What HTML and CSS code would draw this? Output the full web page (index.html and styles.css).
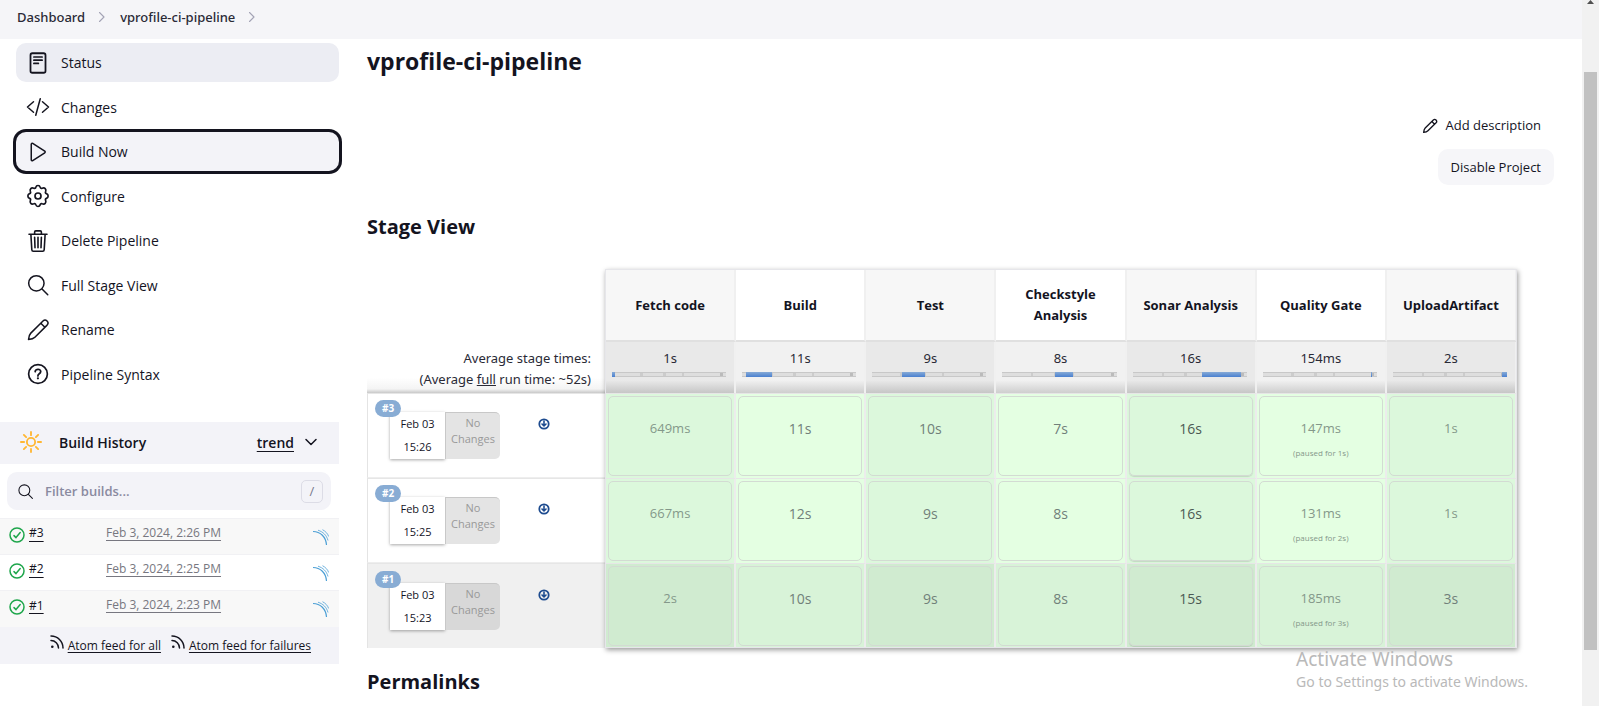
FILE: index.html
```html
<!DOCTYPE html>
<html lang="en">
<head>
<meta charset="utf-8">
<title>vprofile-ci-pipeline</title>
<link rel="stylesheet" href="styles.css">
</head>
<body>
<svg class="defs" width="0" height="0" aria-hidden="true">
  <symbol id="pencil" viewBox="0 0 24 24"><path d="M2.500 21.500c.3-3.200.9-5 2.300-6.400L17 3a2.900 2.900 0 0 1 4.100 4.100L8.900 19.200c-1.400 1.400-3.200 2-6.400 2.300zM14.800 5.200l4.100 4.100"/></symbol>
  <symbol id="search" viewBox="0 0 512 512"><path stroke-width="32" d="M221.090 56a164 164 0 1 0 164 164a164 164 0 0 0-164-164zM342 342L464 464"/></symbol>
  <symbol id="chevron" viewBox="0 0 12 16"><path d="M2 2l6 6-6 6"/></symbol>
  <symbol id="ok" viewBox="0 0 16 16"><circle cx="8" cy="8" r="7"/><path d="M5 8.600l2 2 4.200-5"/></symbol>
  <symbol id="wave" viewBox="0 0 16 16"><path stroke-width="1.200" d="M0 2.500C7.500 2.500 13 8 13.500 16"/><path stroke-width=".8" d="M5 1.200C10 2.800 13.500 6 15 11.500M9.500.7C12.500 2.300 14.500 4.300 15.700 7.500"/></symbol>
  <symbol id="rss" viewBox="0 0 14 14"><circle cx="2.300" cy="11.700" r="1.300" fill="currentColor" stroke="none"/><path d="M1 5.500A7.500 7.500 0 0 1 8.500 13M1 1a12 12 0 0 1 12 12"/></symbol>
  <symbol id="down" viewBox="0 0 12 12"><circle cx="6" cy="6" r="4.700" stroke-width="1.800"/><path stroke-width="1.600" d="M6 3v4.500M4 6l2 2 2-2"/></symbol>
</svg>

<nav class="crumbs" aria-label="Breadcrumb">
  <a href="#">Dashboard</a>
  <svg class="crumb-sep"><use href="#chevron"/></svg>
  <a href="#">vprofile-ci-pipeline</a>
  <svg class="crumb-sep"><use href="#chevron"/></svg>
</nav>

<div class="page">
  <aside class="side">
    <nav class="tasks" aria-label="Tasks">
      <a class="task active" href="#"><svg viewBox="0 0 512 512"><rect x="96" y="48" width="320" height="416" rx="40" stroke-width="38"/><path d="M168 128h176M168 196h176M168 264h96" stroke-width="36"/></svg>Status</a>
      <a class="task" href="#"><svg viewBox="0 0 512 512"><path stroke-width="32" d="M160 368L32 256l128-112M352 368l128-112-128-112M304 80l-96 352"/></svg>Changes</a>
      <a class="task focused" href="#"><svg viewBox="0 0 512 512"><path stroke-width="32" d="M112 91v330c0 17 17 28 31 20l257-168c12-7 12-26 0-34L143 71c-14-8-31 3-31 20z"/></svg>Build Now</a>
      <a class="task" href="#"><svg viewBox="0 0 512 512"><circle cx="256" cy="256" r="64" stroke-width="36"/><path stroke-width="36" d="M208 72q12-40 48-40t48 40q10 32 42 18q40-16 64 8t8 64q-14 32 18 44q36 14 36 50t-36 50q-32 12-18 44q16 40-8 64t-64 8q-32-14-42 18q-12 40-48 40t-48-40q-10-32-42-18q-40 16-64-8t-8-64q14-32-18-44q-36-14-36-50t36-50q32-12 18-44q-16-40 8-64t64-8q32 14 42-18z"/></svg>Configure</a>
      <a class="task" href="#"><svg viewBox="0 0 512 512"><path stroke-width="34" d="M104 112l20 330c1 18 14 32 32 32h200c18 0 31-14 32-32l20-330M64 112h384M184 112V64a24 24 0 0 1 24-24h96a24 24 0 0 1 24 24v48M256 176v224M184 176l8 224M328 176l-8 224"/></svg>Delete Pipeline</a>
      <a class="task" href="#"><svg><use href="#search"/></svg>Full Stage View</a>
      <a class="task" href="#"><svg><use href="#pencil"/></svg>Rename</a>
      <a class="task" href="#"><svg viewBox="0 0 512 512"><circle cx="256" cy="256" r="200" stroke-width="36"/><path stroke-width="38" d="M196 206s1-22 20-37c11-9 26-13 40-13 12 0 22 2 28 5 11 5 30 18 30 43 0 27-18 39-37 52s-23 25-23 40"/><circle class="dot" cx="254" cy="348" r="24"/></svg>Pipeline Syntax</a>
    </nav>

    <section class="history">
      <header class="history-head">
        <svg class="sun" viewBox="0 0 24 24"><circle cx="12" cy="12" r="4.500"/><path d="M12 1v3.500M12 19.500V23M1 12h3.500M19.500 12H23M4.200 4.200l2.500 2.500M17.300 17.300l2.500 2.500M4.200 19.800l2.500-2.500M17.300 6.700l2.500-2.500"/></svg>
        <h2 class="history-title">Build History</h2>
        <a class="trend" href="#">trend</a>
        <svg class="caret" viewBox="0 0 12 12"><path d="M1 3.500l5 5 5-5"/></svg>
      </header>
      <div class="filter">
        <svg><use href="#search"/></svg>
        <input type="text" placeholder="Filter builds..." aria-label="Filter builds">
        <kbd>/</kbd>
      </div>
      <table class="builds">
        <tr><td class="num"><svg class="ok"><use href="#ok"/></svg><a href="#">#3</a></td><td class="when"><a href="#">Feb 3, 2024, 2:26 PM</a></td><td class="sonar"><svg><use href="#wave"/></svg></td></tr>
        <tr><td class="num"><svg class="ok"><use href="#ok"/></svg><a href="#">#2</a></td><td class="when"><a href="#">Feb 3, 2024, 2:25 PM</a></td><td class="sonar"><svg><use href="#wave"/></svg></td></tr>
        <tr><td class="num"><svg class="ok"><use href="#ok"/></svg><a href="#">#1</a></td><td class="when"><a href="#">Feb 3, 2024, 2:23 PM</a></td><td class="sonar"><svg><use href="#wave"/></svg></td></tr>
      </table>
      <footer class="feeds">
        <span class="feed"><svg><use href="#rss"/></svg><a href="#">Atom feed for all</a></span>
        <span class="feed"><svg><use href="#rss"/></svg><a href="#">Atom feed for failures</a></span>
      </footer>
    </section>
  </aside>

  <main class="main">
    <h1>vprofile-ci-pipeline</h1>
    <div class="actions">
      <a class="describe" href="#"><svg><use href="#pencil"/></svg>Add description</a>
      <button class="disable" type="button">Disable Project</button>
    </div>
    <h2 class="section">Stage View</h2>
    <div class="stage-wrap">
      <table class="stages">
        <colgroup><col class="run-col"><col span="7"></colgroup>
        <thead>
          <tr class="names"><td></td><th>Fetch code</th><th>Build</th><th>Test</th><th>Checkstyle Analysis</th><th>Sonar Analysis</th><th>Quality Gate</th><th>UploadArtifact</th></tr>
          <tr class="totals">
            <td>Average stage times:<br>(Average <u>full</u> run time: ~52s)</td>
            <td>1s<div class="bar"><i style="left:0%;width:3%"></i></div></td>
            <td>11s<div class="bar"><i style="left:3%;width:23%"></i></div></td>
            <td>9s<div class="bar"><i style="left:26%;width:20%"></i></div></td>
            <td>8s<div class="bar"><i style="left:46%;width:16%"></i></div></td>
            <td>16s<div class="bar"><i style="left:61%;width:34%"></i></div></td>
            <td>154ms<div class="bar"><i style="left:95%;width:1%"></i></div></td>
            <td>2s<div class="bar"><i style="left:96%;width:4%"></i></div></td>
          </tr>
        </thead>
        <tbody>
          <tr class="run">
            <td><div class="run-info"><span class="badge">#3</span><div class="date"><span>Feb 03</span><span>15:26</span></div><div class="changes">No Changes</div><svg><use href="#down"/></svg></div></td>
            <td><div class="cell faint">649ms</div></td><td><div class="cell">11s</div></td><td><div class="cell">10s</div></td><td><div class="cell">7s</div></td><td><div class="cell strong">16s</div></td><td><div class="cell faint">147ms<small>(paused for 1s)</small></div></td><td><div class="cell faint">1s</div></td>
          </tr>
          <tr class="run">
            <td><div class="run-info"><span class="badge">#2</span><div class="date"><span>Feb 03</span><span>15:25</span></div><div class="changes">No Changes</div><svg><use href="#down"/></svg></div></td>
            <td><div class="cell faint">667ms</div></td><td><div class="cell">12s</div></td><td><div class="cell">9s</div></td><td><div class="cell">8s</div></td><td><div class="cell strong">16s</div></td><td><div class="cell faint">131ms<small>(paused for 2s)</small></div></td><td><div class="cell faint">1s</div></td>
          </tr>
          <tr class="run shaded">
            <td><div class="run-info"><span class="badge">#1</span><div class="date"><span>Feb 03</span><span>15:23</span></div><div class="changes">No Changes</div><svg><use href="#down"/></svg></div></td>
            <td><div class="cell faint">2s</div></td><td><div class="cell">10s</div></td><td><div class="cell">9s</div></td><td><div class="cell">8s</div></td><td><div class="cell strong">15s</div></td><td><div class="cell faint">185ms<small>(paused for 3s)</small></div></td><td><div class="cell">3s</div></td>
          </tr>
        </tbody>
      </table>
    </div>
    <h2 class="permalinks">Permalinks</h2>
  </main>
</div>

<div class="scrollbar" aria-hidden="true"><svg viewBox="0 0 13 13"><path d="M3 4L6.500 0L10 4z"/></svg><div class="thumb"></div></div>
<div class="watermark"><strong>Activate Windows</strong><span>Go to Settings to activate Windows.</span></div>
</body>
</html>
```
FILE: styles.css
```css
* { box-sizing: border-box; }
html { height: 100%; overflow: hidden; }
body {
  margin: 0;
  height: 100%;
  overflow: hidden;
  padding-right: 17px;
  background: #fff;
  color: #14141f;
  font: 14px/21px "Open Sans", "Noto Sans", sans-serif;
}
a { color: inherit; }
svg { flex: none; fill: none; stroke: currentColor; stroke-width: 1.5; stroke-linecap: round; stroke-linejoin: round; }
.defs { position: absolute; }

.crumbs {
  display: flex;
  align-items: center;
  gap: 13px;
  height: 39px;
  padding: 0 17px 5px;
  background: #f5f5f8;
  color: #2a2a36;
  font-family: "Noto Sans", sans-serif;
  font-size: 13px;
  font-weight: 500;
}
.crumbs a { text-decoration: none; }
.crumb-sep { width: 9px; height: 12px; color: #a3a3b5; }

.page { display: flex; }
.side { flex: none; width: 339px; }
.tasks {
  display: grid;
  align-content: space-between;
  min-height: 351px;
  margin: 4px 0 28px 16px;
}
.task {
  display: flex;
  align-items: center;
  gap: 11px;
  height: 39px;
  padding-left: 10px;
  border-radius: 10px;
  font-weight: 500;
  text-decoration: none;
}
.task svg { width: 24px; height: 24px; }
.task .dot { fill: currentColor; stroke: none; }
.active { background: #ecedf3; }
.focused { background: #f3f3f8; box-shadow: 0 0 0 3px #14141f; }

.history-head {
  display: flex;
  align-items: center;
  height: 42px;
  padding: 0 22px 2px 20px;
  background: #f3f3f8;
}
.sun { width: 22px; height: 22px; color: #ffb733; stroke-width: 2; }
.history-title { margin: 0 auto 0 17px; font-size: 14px; line-height: 21px; font-weight: 600; }
.trend { margin-right: 11px; font-size: 14px; font-weight: 600; text-underline-offset: 3px; }
.caret { width: 12px; height: 12px; }
.filter {
  display: flex;
  align-items: center;
  gap: 11px;
  height: 38px;
  margin: 8px 8px 8px 7px;
  padding: 0 8px 0 10px;
  border-radius: 10px;
  background: #f3f3f8;
}
.filter svg { width: 17px; height: 17px; }
.filter input {
  flex: 1;
  min-width: 0;
  padding: 0;
  border: 0;
  background: none;
  font: 600 13px/21px "Open Sans", sans-serif;
}
.filter input::placeholder { color: #8a8aa0; opacity: 1; }
.filter kbd {
  width: 22px;
  height: 23px;
  border: 1px solid #dcdce6;
  border-radius: 5px;
  color: #77778c;
  font: 500 13px/21px "Open Sans", sans-serif;
  text-align: center;
}
.builds { width: 100%; border-collapse: collapse; font-size: 12px; }
.builds tr { border-top: 1px solid #f1f1f4; }
.builds tr:nth-child(odd) { background: #f8f8f8; }
.builds td { height: 36px; padding: 0 0 8px; vertical-align: middle; }
.builds a { text-underline-offset: 3px; }
.num { width: 106px; }
.num a { vertical-align: middle; }
.ok { width: 16px; height: 16px; margin: 4px 4px 0 9px; color: #1ea64b; vertical-align: middle; }
.when { color: #777780; }
.builds .sonar { width: 26px; padding: 0; }
.sonar svg { display: block; width: 16px; height: 16px; color: #4b9fd5; stroke-linecap: butt; }
.feeds {
  display: flex;
  justify-content: flex-end;
  gap: 10px;
  height: 37px;
  padding: 8px 28px 0 0;
  background: #f3f3f8;
  font-size: 12px;
}
.feed { display: flex; gap: 4px; }
.feed svg { width: 14px; height: 14px; }
.feed a { text-underline-offset: 2px; }

.main { flex: 1; min-width: 0; padding: 5px 28px 0; }
h1 { margin: 0; font-size: 23px; line-height: 34px; font-weight: 700; }
.actions { display: flex; flex-direction: column; align-items: flex-end; gap: 6px; padding-top: 30px; font-size: 13px; }
.describe { display: flex; align-items: center; gap: 8px; height: 35px; padding-right: 13px; text-decoration: none; }
.describe svg { width: 16px; height: 16px; stroke-width: 2; }
.disable {
  height: 36px;
  padding: 0 13px;
  border: 0;
  border-radius: 10px;
  background: #f6f6f9;
  color: inherit;
  font: inherit;
}
.section, .permalinks { margin: 0; font-size: 20px; line-height: 30px; font-weight: 700; }
.section { margin: 27px 0; }
.permalinks { margin-top: 19px; }

.stage-wrap { position: relative; margin-right: 37px; }
.stage-wrap::after {
  content: "";
  position: absolute;
  inset: 0 0 0 238px;
  border: 1px solid #e6e6ea;
  box-shadow: 1px 2px 5px rgba(0, 0, 0, .4);
  pointer-events: none;
}
.stages { width: 100%; table-layout: fixed; border-collapse: separate; border-spacing: 0; text-align: center; }
.stages td, .stages th { padding: 0; }
.run-col { width: 239px; }
.names > * { height: 73px; border-bottom: 2px solid #e0e0e0; }
.names > td { border-bottom: 0; }
.stages .names th { padding: 1px 12px 0; border-right: 2px solid #f0f0f0; font-size: 13px; font-weight: 700; }
.names th:nth-child(even) { background: #f7f7f7; }
.stages .totals td {
  height: 51px;
  padding: 6px 5px 0;
  border-right: 2px solid #f0f0f0;
  background: linear-gradient(#f1f1f1 75%, #cecece);
  color: #2a2a36;
  font-family: "Noto Sans", sans-serif;
  font-size: 13px;
  vertical-align: top;
}
.stages .totals td:nth-child(even) { background: linear-gradient(#e9e9e9 75%, #c6c6c6); }
.stages .totals td:first-child {
  padding: 6px 15px 2px 0;
  border: 0;
  background: linear-gradient(#fff 70%, #f4f4f4 92%, #c8c8c8);
  text-align: right;
}
.bar {
  position: relative;
  height: 5px;
  margin: 3px 3px 0 1px;
  border: solid #c8c8c8;
  border-width: 1px 0;
  background: linear-gradient(90deg, transparent 25%, #ccc 25% 27%, transparent 27% 45%, #ccc 45% 47%, transparent 47% 61%, #ccc 61% 63%, transparent 63% 95%, #bbb 95% 97%, transparent 97%) #dedede;
}
.bar i { position: absolute; top: -1px; bottom: -1px; background: linear-gradient(#86aad6, #4a80d0); }

.stages .run td { height: 85px; padding: 2px; border-top: 1px solid #e6e6e6; border-right: 2px solid #ececec; background: #e4ffe2; }
.stages .run td:nth-child(even) { background: #dcf8dc; }
.stages .run td:first-child { padding: 0; border-left: 1px solid #e4e4e4; border-bottom: 1px solid #eee; border-right: 0; background: #fff; }
.stages .shaded td { background: #d8f3d8; }
.stages .shaded td:nth-child(even) { background: #d0ebd0; }
.stages .shaded td:first-child { border-bottom: 0; background: #f0f0f0; }
.cell {
  display: flex;
  flex-direction: column;
  height: 80px;
  padding-top: 21px;
  border: 1px solid #d3dbd3;
  border-radius: 5px;
  color: #71807a;
  font-size: 14px;
}
.cell small { margin-top: 7px; font-size: 8px; line-height: 14px; }
.faint { color: #84988a; font-size: 13px; }
.strong { color: #4c5a54; box-shadow: 0 1px 1px rgba(0, 0, 0, .12); }

.run-info { position: relative; display: flex; height: 83px; padding: 18px 0 0 22px; font-size: 11px; }
.badge {
  position: absolute;
  z-index: 1;
  top: 6px;
  left: 7px;
  padding: 0 7px;
  border-radius: 9px;
  background: #88acd4;
  color: #fff;
  font-size: 10px;
  font-weight: 700;
  line-height: 17px;
}
.date { display: flex; flex-direction: column; justify-content: space-between; width: 55px; height: 47px; padding: 1px 0 2px; background: #fff; box-shadow: 0 1px 3px rgba(0, 0, 0, .35); }
.changes { width: 55px; height: 47px; padding: 2px 0; border: solid #c8c8c8; border-width: 1px 0 0 1px; border-radius: 0 5px 5px 0; background: #e4e4e4; color: #999; line-height: 16px; }
.shaded .changes { background: #d8d8d8; }
.run-info svg { width: 12px; height: 12px; margin: 6px 0 0 38px; color: #1d4b8f; }

.scrollbar { position: absolute; inset: 0 0 0 auto; width: 17px; padding: 0 2px; background: #f1f1f1; overflow: hidden; }
.scrollbar svg { display: block; width: 13px; height: 13px; fill: #505050; stroke: none; }
.thumb { height: 578px; margin-top: 59px; background: #c1c1c1; }
.watermark { position: absolute; right: 71px; bottom: 14px; display: flex; flex-direction: column; color: #b9b9b9; font: 14px/20px "Noto Sans", sans-serif; }
.watermark strong { font-size: 19px; font-weight: 400; line-height: 26px; }
```
